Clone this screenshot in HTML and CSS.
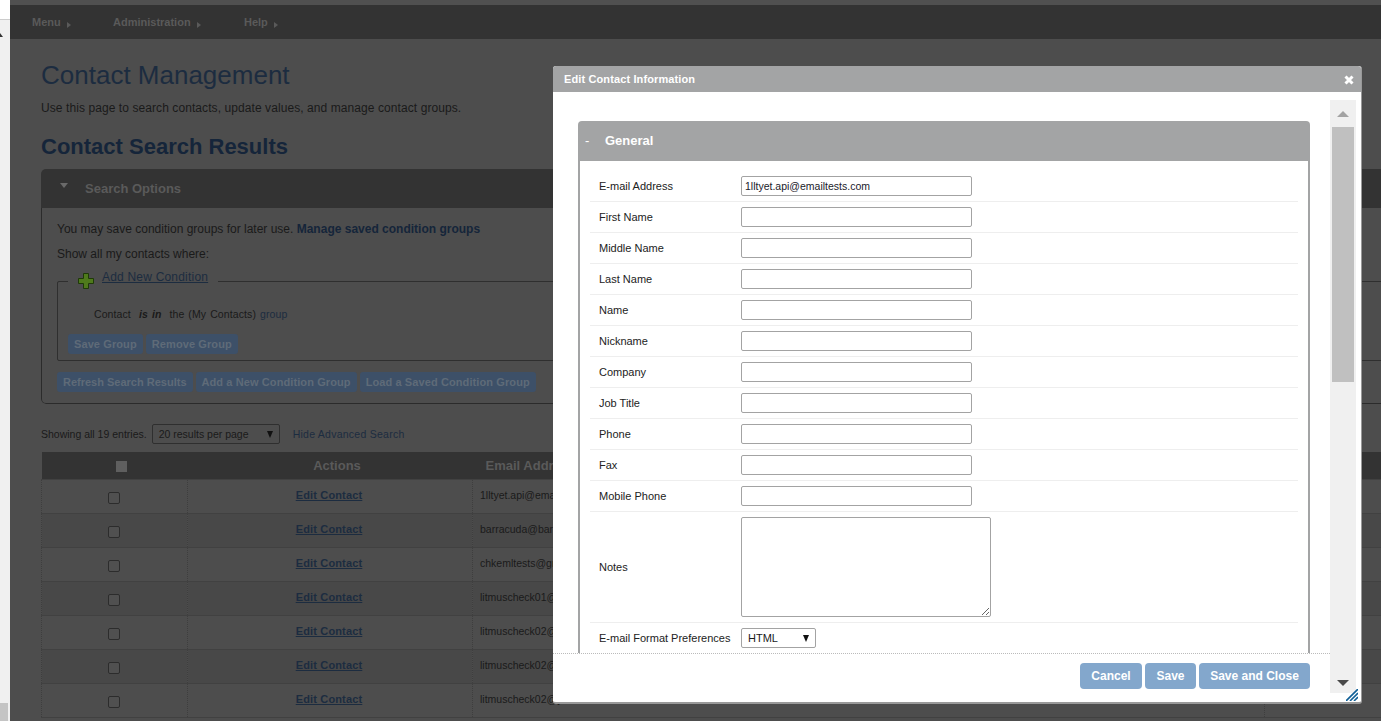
FILE: index.html
```html
<!DOCTYPE html>
<html lang="en">
<head>
	<meta charset="UTF-8">
	<title>Contact Management</title>
	<link rel="stylesheet" href="styles.css">
</head>
<body>
	<div class="gutter">
		<div class="gutter-top"></div>
		<div class="gutter-caret"></div>
		<div class="gutter-thumb"></div>
	</div>
	<div class="page">
		<div class="top-strip"></div>
		<ul class="menu">
			<li class="menu-main">Menu</li>
			<li class="menu-admin">Administration</li>
			<li>Help</li>
		</ul>
		<div class="content">
			<h1>Contact Management</h1>
			<p class="intro">Use this page to search contacts, update values, and manage contact groups.</p>
			<h2>Contact Search Results</h2>
			<div class="panel">
				<div class="panel-head"><span class="panel-arrow"></span>Search Options</div>
				<div class="panel-body">
					<p class="save-note">You may save condition groups for later use. <a href="#" class="strong-link">Manage saved condition groups</a></p>
					<p class="show-note">Show all my contacts where:</p>
					<fieldset class="group">
						<legend>
							<svg class="plus" width="16" height="16" viewBox="0 0 16 16"><path d="M5.5 .5h5v5h5v5h-5v5h-5v-5h-5v-5h5z" fill="#4f7a1c" stroke="#1f3a08"/></svg>
							<a href="#">Add New Condition</a>
						</legend>
						<p class="condition">Contact <b>is in</b> the (My Contacts) <span class="link-text">group</span></p>
						<div class="btn-row">
							<span class="dim-btn">Save Group</span>
							<span class="dim-btn">Remove Group</span>
						</div>
					</fieldset>
					<div class="btn-row outer-btns">
						<span class="dim-btn">Refresh Search Results</span>
						<span class="dim-btn">Add a New Condition Group</span>
						<span class="dim-btn">Load a Saved Condition Group</span>
					</div>
				</div>
			</div>
			<div class="results-bar">
				<span>Showing all 19 entries.</span>
				<span class="fake-select per-page">20 results per page</span>
				<a href="#" class="hide-link">Hide Advanced Search</a>
			</div>
			<table class="results">
				<thead>
					<tr>
						<th class="col-check"><span class="head-check"></span></th>
						<th class="col-actions">Actions</th>
						<th class="col-email">Email Address</th>
						<th class="col-rest"></th>
					</tr>
				</thead>
				<tbody>
					<tr><td class="cell-check"><input type="checkbox"></td><td class="cell-action"><a href="#">Edit Contact</a></td><td>1lltyet.api@emailtests.com</td><td></td></tr>
					<tr><td class="cell-check"><input type="checkbox"></td><td class="cell-action"><a href="#">Edit Contact</a></td><td>barracuda@barracuda.emailtests.com</td><td></td></tr>
					<tr><td class="cell-check"><input type="checkbox"></td><td class="cell-action"><a href="#">Edit Contact</a></td><td>chkemltests@gmail.com</td><td></td></tr>
					<tr><td class="cell-check"><input type="checkbox"></td><td class="cell-action"><a href="#">Edit Contact</a></td><td>litmuscheck01@gmail.com</td><td></td></tr>
					<tr><td class="cell-check"><input type="checkbox"></td><td class="cell-action"><a href="#">Edit Contact</a></td><td>litmuscheck02@gmail.com</td><td></td></tr>
					<tr><td class="cell-check"><input type="checkbox"></td><td class="cell-action"><a href="#">Edit Contact</a></td><td>litmuscheck02@emailtests.com</td><td></td></tr>
					<tr><td class="cell-check"><input type="checkbox"></td><td class="cell-action"><a href="#">Edit Contact</a></td><td>litmuscheck02@yahoo.com</td><td></td></tr>
				</tbody>
			</table>
		</div>
	</div>

	<div class="modal">
		<div class="modal-title">
			<span>Edit Contact Information</span>
			<svg class="close" width="10" height="10" viewBox="0 0 10 10"><path d="M1.5 1.5l7 7M8.5 1.5l-7 7" stroke="#fff" stroke-width="3"/></svg>
		</div>
		<div class="modal-main">
			<div class="modal-left">
				<div class="modal-scroll">
					<div class="section">
						<div class="section-head"><span class="dash">-</span>General</div>
						<div class="section-body">
							<div class="row"><label>E-mail Address</label><input type="text" value="1lltyet.api@emailtests.com"></div>
							<div class="row"><label>First Name</label><input type="text"></div>
							<div class="row"><label>Middle Name</label><input type="text"></div>
							<div class="row"><label>Last Name</label><input type="text"></div>
							<div class="row"><label>Name</label><input type="text"></div>
							<div class="row"><label>Nickname</label><input type="text"></div>
							<div class="row"><label>Company</label><input type="text"></div>
							<div class="row"><label>Job Title</label><input type="text"></div>
							<div class="row"><label>Phone</label><input type="text"></div>
							<div class="row"><label>Fax</label><input type="text"></div>
							<div class="row"><label>Mobile Phone</label><input type="text"></div>
							<div class="row"><label>Notes</label><textarea></textarea></div>
							<div class="row"><label>E-mail Format Preferences</label><span class="fake-select format">HTML</span></div>
						</div>
					</div>
				</div>
				<div class="modal-foot">
					<button type="button" class="btn-cancel">Cancel</button>
					<button type="button" class="btn-save">Save</button>
					<button type="button" class="btn-close">Save and Close</button>
				</div>
			</div>
			<div class="scrollbar">
				<span class="arrow-up"></span>
				<span class="thumb"></span>
				<span class="arrow-down"></span>
			</div>
		</div>
		<svg class="grip" width="12" height="12" viewBox="0 0 12 12"><path d="M0 12L12 0M4 12l8-8M8 12l4-4" stroke="#0f5f96" stroke-width="1.6"/></svg>
	</div>
</body>
</html>
```

FILE: styles.css
```css
*{
	box-sizing: border-box;
	padding: 0;
	margin: 0;
}
html, body{
	height: 100%;
	overflow: hidden;
}
body{
	display: flex;
	font-family: "Liberation Sans", Arial, sans-serif;
	font-size: 11px;
	color: #1a1a1a;
	background: #4d4d4d;
}
a{
	color: #1c2c40;
}

/* browser gutter on the left */
.gutter{
	flex: 0 0 10px;
	height: 721px;
	display: flex;
	flex-direction: column;
	background: #f0f0f0;
}
.gutter-top{
	height: 20px;
	background: #fff;
	border-bottom: 1px solid #ccc;
}
.gutter-caret{
	width: 0;
	margin-top: 13px;
	border-left: 3px solid transparent;
	border-right: 3px solid transparent;
	border-bottom: 4px solid #333;
	margin-left: -3px;
}
.gutter-thumb{
	width: 8px;
	height: 18px;
	margin-top: auto;
	background: #c4c4c4;
}

/* page behind the dialog, already dimmed */
.page{
	flex: 1;
	min-width: 0;
}
.top-strip{
	height: 5px;
	background: #505050;
}
.menu{
	display: flex;
	height: 34px;
	padding-left: 22px;
	list-style: none;
	align-items: center;
	background: #333;
	font-weight: bold;
	color: #5a5a5a;
}
.menu li{
	position: relative;
}
.menu li::after{
	content: "";
	display: inline-block;
	margin-left: 6px;
	position: relative;
	top: 2px;
	border-left: 4px solid #5a5a5a;
	border-top: 3px solid transparent;
	border-bottom: 3px solid transparent;
}
.menu-main{
	width: 81px;
}
.menu-admin{
	width: 131px;
}
.content{
	width: 1400px;
	padding: 20px 0 0 31px;
}
h1{
	font-size: 26px;
	line-height: 32px;
	font-weight: normal;
	color: #1c2c40;
}
.intro{
	margin-top: 10px;
	font-size: 12px;
	line-height: 14px;
	letter-spacing: .08px;
}
h2{
	margin-top: 19px;
	font-size: 22px;
	line-height: 26px;
	color: #15253a;
}
.panel{
	margin-top: 9px;
	border-radius: 5px;
	overflow: hidden;
}
.panel-head{
	height: 39px;
	line-height: 39px;
	padding-left: 44px;
	position: relative;
	background: #333;
	font-size: 13px;
	font-weight: bold;
	color: #5a5a5a;
}
.panel-arrow{
	position: absolute;
	left: 19px;
	top: 14px;
	border-top: 5px solid #6a6a6a;
	border-left: 4px solid transparent;
	border-right: 4px solid transparent;
}
.panel-body{
	height: 196px;
	padding: 14px 0 0 15px;
	border: 1px solid #2b2b2b;
	border-top: 0;
	border-radius: 0 0 5px 5px;
	font-size: 12px;
}
.save-note{
	line-height: 14px;
}
.strong-link{
	font-weight: bold;
	text-decoration: none;
	color: #15253a;
}
.show-note{
	margin-top: 11px;
	line-height: 14px;
}
.group{
	height: 88px;
	margin-top: 12px;
	padding: 0 0 0 10px;
	border: 1px solid #2f2f2f;
	border-radius: 2px;
}
.group legend{
	display: flex;
	align-items: flex-start;
	gap: 8px;
	padding: 0 10px;
	font-size: 12px;
	line-height: 14px;
	height: 16px;
}
.group legend a{
	margin-top: -3px;
	letter-spacing: .2px;
}
.condition{
	margin-top: 18px;
	padding-left: 26px;
	font-size: 10.5px;
	line-height: 14px;
	word-spacing: 1px;
	letter-spacing: .1px;
}
.condition b{
	font-style: italic;
	margin: 0 4px;
}
.link-text{
	color: #1c2c40;
}
.btn-row{
	display: flex;
	gap: 3px;
	margin-top: 13px;
}
.dim-btn{
	height: 20px;
	line-height: 20px;
	padding: 0 6px;
	background: #3d5068;
	border-radius: 3px;
	font-size: 11px;
	font-weight: bold;
	letter-spacing: .1px;
	color: #5f6b78;
	white-space: nowrap;
}
.outer-btns{
	margin-top: 11px;
}
.outer-btns .dim-btn:first-child{
	letter-spacing: 0;
}
.results-bar{
	display: flex;
	align-items: center;
	height: 20px;
	margin-top: 20px;
	font-size: 10.5px;
}
.fake-select{
	display: inline-block;
	position: relative;
	height: 20px;
	line-height: 18px;
	border: 1px solid #2f2f2f;
	border-radius: 2px;
}
.fake-select::after{
	content: "";
	position: absolute;
	right: 6px;
	top: 6px;
	border-top: 7px solid #111;
	border-left: 3px solid transparent;
	border-right: 3px solid transparent;
}
.per-page{
	width: 128px;
	margin-left: 5px;
	padding-left: 6px;
}
.hide-link{
	margin-left: 13px;
	text-decoration: none;
	letter-spacing: .25px;
}
.results{
	width: 1400px;
	margin-top: 8px;
	table-layout: fixed;
	border-collapse: collapse;
}
.results th{
	height: 27px;
	background: #333;
	font-size: 13px;
	color: #5a5a5a;
}
.col-check{
	width: 146px;
	padding-left: 14px;
}
.col-actions{
	width: 285px;
	padding-left: 14px;
}
.col-email{
	width: 792px;
	text-align: left;
	padding-left: 13px;
}
.head-check{
	display: block;
	width: 11px;
	height: 11px;
	margin: 2px auto 0;
	background: #5f5f5f;
}
.results td{
	height: 34px;
	padding: 0 0 2px 7px;
	border: 1px dotted #3e3e3e;
	border-top: 1px solid #414141;
	border-bottom: 1px solid #414141;
	font-size: 10.5px;
	white-space: nowrap;
	overflow: hidden;
}
.results tr:nth-child(even) td{
	background: #484848;
}
.results .cell-check{
	padding: 0;
	text-align: center;
}
.cell-check input{
	appearance: none;
	display: block;
	width: 12px;
	height: 12px;
	margin: 3px auto 0 auto;
	position: relative;
	left: -1px;
	border: 1px solid #2c2c2c;
	border-radius: 2px;
	background: #505050;
}
.results .cell-action{
	padding-left: 0;
	padding-right: 2px;
	text-align: center;
	font-size: 11px;
	font-weight: bold;
	letter-spacing: .15px;
}

/* dialog */
.modal{
	position: absolute;
	left: 553px;
	top: 66px;
	width: 809px;
	height: 638px;
	background: #fff;
	border-radius: 3px;
	border-right: 1px solid #999;
	border-bottom: 2px solid #999;
}
.modal-title{
	display: flex;
	justify-content: space-between;
	align-items: center;
	height: 26px;
	padding: 0 7px 0 11px;
	background: #a3a4a5;
	border-radius: 3px 3px 0 0;
	font-weight: bold;
	letter-spacing: .12px;
	color: #fff;
}
.close{
	margin-top: 1px;
}
.modal-main{
	display: flex;
	height: 609px;
}
.modal-left{
	width: 777px;
}
.modal-scroll{
	height: 562px;
	padding: 29px 20px 0 25px;
	overflow: hidden;
	border-bottom: 1px dotted #bbb;
}
.section-head{
	height: 40px;
	line-height: 39px;
	background: #a3a4a5;
	border-radius: 4px 4px 0 0;
	font-size: 13px;
	font-weight: bold;
	color: #fff;
}
.dash{
	display: inline-block;
	width: 27px;
	padding-left: 7px;
	font-weight: normal;
}
.section-body{
	padding: 10px 10px 0;
	border: 2px solid #a3a4a5;
	border-top: 0;
	border-bottom: 0;
}
.row{
	display: flex;
	align-items: center;
	padding: 5px 0;
	border-bottom: 1px solid #eee;
}
.row label{
	flex: 0 0 151px;
	padding-left: 9px;
	color: #222;
}
.row input{
	width: 231px;
	height: 20px;
	padding: 0 3px;
	border: 1px solid #a3a3a3;
	border-radius: 2px;
	font-family: inherit;
	font-size: 10.5px;
	color: #1a1a2a;
}
.row textarea{
	display: block;
	width: 250px;
	height: 100px;
	border: 1px solid #a3a3a3;
	border-radius: 2px;
}
.format{
	width: 75px;
	padding-left: 6px;
	border-color: #a3a3a3;
	font-size: 11px;
}
.modal-foot{
	display: flex;
	justify-content: flex-end;
	gap: 3px;
	padding: 9px 20px 0 0;
}
.modal-foot button{
	height: 26px;
	border: 0;
	border-radius: 4px;
	background: #83a7cc;
	font-family: inherit;
	font-size: 12px;
	font-weight: bold;
	color: #fff;
}
.btn-cancel{
	width: 62px;
}
.btn-save{
	width: 51px;
}
.btn-close{
	width: 111px;
}
.scrollbar{
	display: flex;
	flex-direction: column;
	align-items: center;
	width: 26px;
	height: 593px;
	margin-top: 8px;
	background: #f0f0f0;
}
.arrow-up{
	margin-top: 11px;
	border-bottom: 6px solid #a3a3a3;
	border-left: 6px solid transparent;
	border-right: 6px solid transparent;
}
.thumb{
	width: 22px;
	height: 255px;
	margin-top: 10px;
	background: #c0c0c0;
}
.arrow-down{
	margin-top: auto;
	margin-bottom: 7px;
	border-top: 6px solid #4a4a4a;
	border-left: 6px solid transparent;
	border-right: 6px solid transparent;
}
.grip{
	position: absolute;
	right: 3px;
	bottom: 1px;
}
```
